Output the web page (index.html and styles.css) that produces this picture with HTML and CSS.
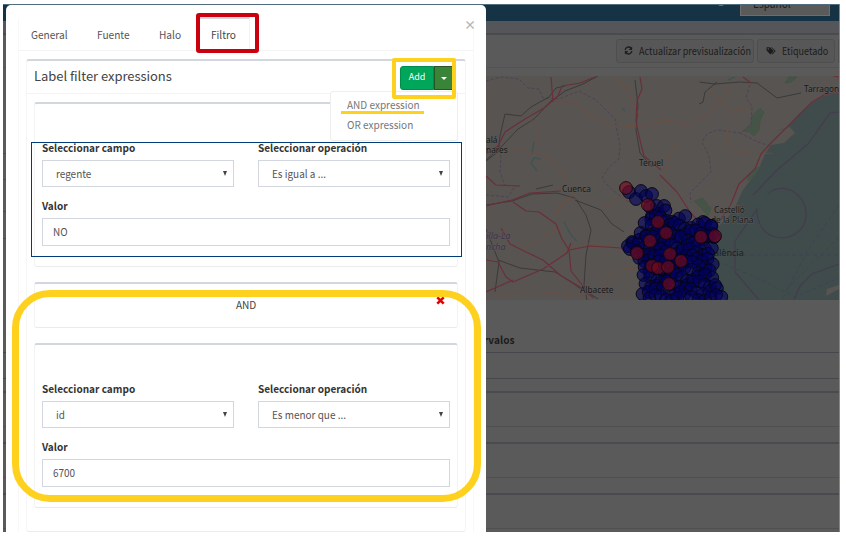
FILE: index.html
```html
<!DOCTYPE html>
<html lang="es">
<head>
<meta charset="utf-8">
<title>Filtro de etiquetas</title>
<link rel="stylesheet" href="styles.css">
</head>
<body>
<div class="frame">
  <div class="page">
    <header class="navbar"><i class="avatar"></i><div class="language"><span>Español</span></div></header>
    <div class="subbar"></div>
    <div class="toolbar">
      <button class="tool"><svg class="tool-icon" viewBox="0 0 16 16"><path d="M2 7a6 6 0 0 1 10.500-3M14 9a6 6 0 0 1-10.500 3" fill="none" stroke="currentColor" stroke-width="2.400"/><path d="M14.500 1v6h-6zM1.500 15V9h6z"/></svg><span class="t-refresh">Actualizar previsualización</span></button>
      <button class="tool tool-tag"><svg class="tool-icon tag-icon" viewBox="0 0 18 16"><path fill-rule="evenodd" d="M1 2h6l7 7-6 6-7-7zM4 4a1.300 1.300 0 1 0 .1 0z"/><path d="M9 2h1.500l7 7-6 6-1-1 5-5z"/></svg><span class="t-tag">Etiquetado</span></button>
      <button class="tool tool-cut"></button>
    </div>
    <div class="map-row">
      <div class="side-lines"></div>
      <svg class="map" viewBox="486 76 353 224" preserveAspectRatio="none">
        <rect x="486" y="76" width="353" height="224" fill="#575451"/>
        <path d="M839 93L824 96 812 103 799 114 786 129 776 131 790 127 795 133 784 143 771 145 765 154 760 166 752 178 743 190 736 205 728 217 718 227 713 240 707 255 712 278 725 300H839V289L826 296 827 289 839 285z" fill="#404b4b"/>
        <g class="green"><path d="M760 108l-8 8-1 9-8 6 6 1 5 4 5-6 1-9 4-9zM785 83l4-6h8l-6 5zM760 167l-6 2-5 6-2 6 8-6zM694 201l9-3 5 7 3 3-3 8-6-7z"/></g>
        <g class="water"><path d="M534 142l-2 12M541 159l-7-1-3 5 6 8M564 222l4 8 4 6 5 5M728 80l7-3M622 108l3 3"/></g>
        <g class="boundary">
          <path d="M486 81l15-4 18 2 9 9 11 1 4 9 16 1 20-8 17 9 10 10 9 9 2 12 3 14-1 14-10 8-7 11 7 9 10 8 11 8"/>
          <path d="M750 85l-4 13 6 8-1 18-10 9-24-3-10 4-5 8 7 14 2 16-12 12-9 9 1 10M740 133l18 9 12 4M499 145l2 12-1 15 5 14M486 195l22 2 8-12"/>
        </g>
        <g class="sea-line"><path d="M839 112l-9 1-22 31-31 26-24 25M768 194c5-7 18-7 26-2 14 9 16 28 5 39-12 11-31 8-38-5-4-6-4-15-4-17l-22 32v31l24 28M839 264l-27 10-12 12-6 14"/></g>
        <g class="ferry"><path d="M722 255h117M839 205l-30 43-27 52M717 261l42 18 36 18 44-19M839 237l-54 54"/></g>
        <g class="rail">
          <path d="M486 161l12-9 2-16 5-22 16 2 10-9 18-10 7-9 9-2M553 100l12-9 18-7 15-8M486 160l16-14 16-17 16-10 19-20M486 205l26-4 20-7 25-1 18 5 11 17 5 15-5 25-2 30 4 20M486 229l13 33-4 30M498 260l22 8 35 4 25 15 18 12M635 80l3 25-2 25 4 23 12 14M699 82l16 2 25-2 17 1 20 15 24-5M717 82l-12 10-2 10-4 2M575 200l26 10 11 14 12 8M536 189l17-4"/>
        </g>
        <g class="secondary">
          <path d="M553 102l20 0 18 13 20 10 26 2 17-4 18-3M615 77l14 14 2 8 8 16M530 119l10 14-5 10 1 10M506 147l19 4 20 6 10 5 9 16 8 10 4 12M660 118l25 7 18-7 12-10 6-5M695 78l12 12 18 13 7 9 18-5M721 103l4-10 6-10M730 110l-1 24-3 10 12 8 20 2 15-1M652 189l13-15 4-18 10-16M572 195l-14 14-1 20-20 12-14 8M547 240l14 14 21-11 37 5M498 295l22-4 30 1 29 4 22-6 15-20 35-4M600 209l21-12 24 12"/>
        </g>
        <g class="motorway">
          <path d="M486 154l12-8 7-14 20-13 19-11 14-12 4-10 18-3 15-6M553 102l-2-25M640 77l2 12-5 12-1 20 3 15 5 20 17 14M839 92l-15 3-12 7-14 14-16 16-12 12-9 10-6 15-16 15-8 20-12 18M660 175l17 17 13 20 12 13M486 206l26-6 18-7 31-2M513 202l13 9 13 1 17 12 6 15 7 11 21-4 31 2M486 176l10 9 24 1M501 228l9 16 14 7 19 9 17 15 14 9 20 14M486 260l12 2 8 15 7 5 30-13 24-16 4-10M569 249l2 22 12 15M486 292l27-12M839 77l-6-1M743 77l8 6"/>
        </g>
        <g class="place">
          <text x="486" y="143">alá</text><text x="486" y="153">nares</text>
          <text x="639" y="166">Teruel</text><text x="804" y="92">Tarragona</text>
          <text x="562" y="192">Cuenca</text><text x="580" y="293">Albacete</text>
          <text x="714" y="213">Castelló</text><text x="711" y="223">de la Plana</text>
          <text class="region" x="486" y="239">illa-La</text><text class="region" x="486" y="250">ncha</text>
        </g>
        <g id="markers"></g>
        <text class="valencia" x="714" y="256">alència</text>
      </svg>
    </div>
    <div class="interval-title"><span>Intervalos</span></div>
    <div class="interval-input"></div>
    <div class="back-box"></div>
    <div class="back-box"></div>
    <div class="back-box"></div>
  </div>

  <section class="modal">
    <button class="close">×</button>
    <div class="tab-card">
      <nav class="tabs">
        <a class="tab"><span>General</span></a><a class="tab tab-fuente"><span>Fuente</span></a><a class="tab tab-halo"><span>Halo</span></a><a class="tab active"><span>Filtro</span></a>
      </nav>
      <div class="panel">
        <div class="panel-head">
          <h3>Label filter expressions</h3>
          <div class="split"><button class="add">Add</button><button class="toggle"><i></i></button></div>
        </div>
        <div class="panel-body">
          <div class="box expression">
            <div class="grid">
              <div><label><span>Seleccionar campo</span></label><div class="control select"><span>regente</span></div></div>
              <div><label><span>Seleccionar operación</span></label><div class="control select"><span>Es igual a ...</span></div></div>
            </div>
            <label class="value-label"><span>Valor</span></label>
            <div class="control input"><span>NO</span></div>
          </div>
          <div class="box operator"><span>AND</span><svg class="remove" viewBox="0 0 9 9"><path d="M1.300 1.300l6.400 6.400M7.700 1.300L1.300 7.700"/></svg></div>
          <div class="box expression">
            <div class="grid">
              <div><label><span>Seleccionar campo</span></label><div class="control select"><span>id</span></div></div>
              <div><label><span>Seleccionar operación</span></label><div class="control select"><span>Es menor que ...</span></div></div>
            </div>
            <label class="value-label"><span>Valor</span></label>
            <div class="control input"><span>6700</span></div>
          </div>
        </div>
      </div>
    </div>
    <div class="dropdown"><a><span>AND expression</span></a><a><span>OR expression</span></a></div>
  </section>
</div>
<div class="mark mark-tab"></div>
<div class="mark mark-add"></div>
<div class="mark mark-line"></div>
<div class="mark mark-first"></div>
<div class="mark mark-second"></div>
<script src="markers.js"></script>
</body>
</html>
```
FILE: styles.css
```css
* { box-sizing: border-box; }
body { margin: 0; width: 846px; height: 536px; overflow: hidden; background: #fff; position: relative; font: 11px/16px "Noto Sans CJK SC", "Noto Sans", sans-serif; color: #555; padding: 4px 0 0 3px; }
button { font: inherit; padding: 0; margin: 0; }
span { white-space: nowrap; display: inline-block; transform-origin: left center; }

.frame { width: 837px; height: 528px; position: relative; overflow: hidden; }
.page { height: 528px; background: #5a5a5a; border-right: 1px solid #858585; display: flex; flex-direction: column; color: #1c1c1c; }
.page > * { flex-shrink: 0; }
.navbar { height: 17px; background: #163346; border-top: 1px solid #506c7d; display: flex; justify-content: flex-end; padding-right: 9px; overflow: hidden; }
.avatar { width: 10px; height: 10px; border-radius: 50%; background: #6e757a; margin: -9px 14px 0 0; }
.language { width: 90px; height: 11px; border: 1px solid #6d6d6d; border-top: 0; background: #5a5a5a; overflow: hidden; padding-left: 12px; }
.language span { display: block; margin-top: -10px; font-size: 11.500px; transform: scaleX(.88); }
.subbar { height: 14px; background: #555659; border-bottom: 2px solid #4a4b4e; }
.toolbar { height: 33px; border-bottom: 1px solid #535353; display: flex; justify-content: flex-end; gap: 3px; padding-top: 4px; }
.tool { height: 24px; border: 1px solid #4e4e4e; border-radius: 3px; background: #575757; color: #1c1c1c; width: 138px; display: flex; align-items: center; padding-left: 7px; gap: 6px; font-size: 10.500px; flex: none; line-height: 20px; padding-bottom: 1px; }
.tool span { transform: scaleX(.86); }
.tool-tag { width: 78px; padding-left: 8px; }
.tool-cut { width: 1px; border-right: 0; padding: 0; border-radius: 0; }
.tool-icon { width: 9px; height: 9px; fill: currentColor; flex: none; }
.tag-icon { width: 10px; }

.map-row { height: 232px; padding-top: 8px; display: flex; justify-content: space-between; }
.side-lines { width: 3px; background: linear-gradient(#4a4a4f 0 1px, transparent 1px 26px, #4a4a4f 26px 27px, transparent 27px 58px, #4a4a4f 58px 59px, transparent 59px 85px, #4a4a4f 85px 86px, transparent 86px); margin-top: 77px; }
.map { width: 353px; height: 224px; display: block; }
.map path { stroke-linejoin: round; }
.green path { fill: #465448; stroke: #3e5542; stroke-width: .8; }
.water path { fill: none; stroke: #405454; stroke-width: 1.600; }
.boundary path { fill: none; stroke: #4d4355; stroke-width: 1; stroke-dasharray: 3 2; }
.sea-line path { fill: none; stroke: #443c4e; stroke-width: 1.200; }
.ferry path { fill: none; stroke: #384254; stroke-width: .8; stroke-dasharray: 4 3; }
.rail path { fill: none; stroke: #353433; stroke-width: .8; }
.secondary path { fill: none; stroke: #704c3c; stroke-width: .8; }
.motorway path { fill: none; stroke: #6b2f3a; stroke-width: 1.200; }
.place text { font: 8.300px "Noto Sans", sans-serif; fill: #171717; stroke: #5c5a58; stroke-width: 1.200px; paint-order: stroke; }
.place .region { font-style: italic; fill: #3f3048; font-size: 9px; }
.valencia { font: 9px "Noto Sans", sans-serif; fill: #1c1f22; }
.marker { fill: #02025c; fill-opacity: .62; stroke: #040414; stroke-width: .9; }
.marker.red { fill: #7a0c18; fill-opacity: .62; }

.interval-title { margin-top: 32px; padding-left: 461px; height: 20px; line-height: 16px; font-weight: 700; font-size: 10.500px; }
.interval-title span { transform: scaleX(.965); }
.interval-input { height: 27px; border: solid #46464d; border-width: 1px 0; margin-bottom: 12px; }
.back-box { height: 36px; border-top: 2px solid #4a4a50; border-bottom: 1px solid #505052; margin-bottom: 15px; }

.modal { position: absolute; left: 3px; top: 1px; width: 480px; height: 540px; background: #fff; border-radius: 5px 5px 0 0; padding: 12px 12px 0; }
.close { position: absolute; left: 458px; top: 11px; width: 11px; height: 18px; border: 0; background: none; color: #b5b5b5; font: 700 12px/18px "Noto Sans CJK SC", sans-serif; }
.tab-card { width: 456px; height: 528px; border: 1px solid #f8f8f8; border-top: 0; border-radius: 3px; }
.tabs { height: 34px; border-bottom: 1px solid #f4f4f4; display: flex; padding-left: 12px; line-height: 34px; }
.tab { width: 66px; display: block; }
.tab span { transform: scaleX(.92); }
.tab-fuente { width: 62px; }
.tab-halo { width: 39px; }
.tab.active { width: 52px; border: solid #f4f4f4; border-width: 2px 1px 0; border-top-color: #d2d6de; padding-left: 12px; line-height: 30px; color: #444; }
.panel { margin: 8px 7px 0; height: 473px; border: 1px solid #f5f5f5; border-top: 2px solid #d2d6de; border-bottom-color: #ececec; border-radius: 3px; }
.panel-head { height: 33px; border-bottom: 1px solid #f4f4f4; display: flex; justify-content: space-between; padding: 5px 11px 0 7px; color: #444; }
h3 { margin: 0; font-size: 13px; line-height: 20px; font-weight: 400; letter-spacing: -.05px; }
.split { display: flex; height: 24px; }
.add { width: 34px; background: #00a65a; border: 1px solid #008d4c; border-radius: 3px 0 0 3px; color: #fff; font-size: 9px; line-height: 20px; padding-bottom: 2px; }
.toggle { width: 20px; background: #398439; border: 1px solid #255625; display: flex; align-items: center; justify-content: center; }
.toggle i { border: 3px solid transparent; border-top-color: #fff; border-bottom: 0; }
.panel-body { padding: 8px 7px 0; }
.box { border: 1px solid #f3f3f3; border-top: 2px solid #d2d6de; border-bottom-color: #ebebeb; border-radius: 3px; margin-bottom: 15px; }
.expression { height: 165px; padding: 36px 7px 0; }
.operator { height: 46px; position: relative; text-align: center; line-height: 40px; color: #444; margin-bottom: 15px; }
.operator span { transform: scaleX(.92); transform-origin: center; }
.remove { position: absolute; left: 401px; top: 12px; width: 9px; height: 9px; stroke: #e60000; stroke-width: 2.600; }
.grid { display: grid; grid-template-columns: 192px 192px; column-gap: 24px; }
label { display: block; height: 20px; line-height: 16px; font-weight: 700; color: #333; font-size: 10.500px; }
label span { transform: scaleX(.955); }
.value-label { margin-top: 11px; }
.control { border: 1px solid #d2d6de; height: 27px; line-height: 25px; background: #fff; color: #555; }
.control span { transform: scaleX(.905); }
.select { padding-left: 13px; position: relative; }
.select::after { content: ""; position: absolute; right: 6px; top: 10px; border: 2.500px solid transparent; border-top: 5px solid #444; border-bottom: 0; }
.input { height: 28px; line-height: 25px; padding-left: 10px; }
.dropdown { position: absolute; left: 324px; top: 86px; width: 128px; height: 50px; background: #fff; border: 1px solid #eee; border-radius: 3px; padding: 2px 0 0 16px; color: #777; }
.dropdown a { display: block; line-height: 20px; height: 20px; }
.dropdown span { transform: scaleX(.91); }

.mark { position: absolute; }
.mark-tab { left: 196px; top: 13px; width: 63px; height: 40px; border: 4px solid #c9000d; border-radius: 3px; }
.mark-add { left: 392px; top: 58px; width: 64px; height: 41px; border: 4px solid #ffd11f; border-radius: 2px; }
.mark-line { left: 341px; top: 111px; width: 83px; height: 3px; background: #ffd11f; }
.mark-first { left: 31px; top: 142px; width: 431px; height: 115px; border: 1px solid #003b7a; }
.mark-second { left: 12px; top: 290px; width: 469px; height: 212px; border: 7px solid #ffd11f; border-radius: 38px; }
```
FILE: markers.js
```js
// Point layer: dense coastal cluster described by row extents [y, left, right].
const rows = [[213,652,664],[219,651,684],[226,645,710],[233,640,714],[239,633,713],[246,627,712],[252,631,707],[258,638,709],[264,646,712],[271,648,709],[278,645,712],[284,644,716],[291,644,716],[298,648,722]];
const loose = [[629,192],[636,199],[641,191],[646,196],[652,194],[650,207],[657,206],[664,206],[703,222],[711,226]];
const red = [[626,188],[648,205],[658,222],[666,233],[650,241],[637,253],[701,237],[715,236],[670,254],[652,266],[658,268],[668,267],[681,261],[669,284]];
const layer = document.getElementById('markers');
function dot(x, y, cls) {
  const c = document.createElementNS('http://www.w3.org/2000/svg', 'circle');
  c.setAttribute('cx', x);
  c.setAttribute('cy', y);
  c.setAttribute('r', 6.4);
  c.setAttribute('class', cls);
  layer.appendChild(c);
}
loose.forEach(p => dot(p[0], p[1], 'marker'));
rows.forEach(([y, a, b], r) => {
  const n = Math.max(1, Math.round((b - a) / 6));
  for (let i = 0; i <= n; i++) {
    dot(a + (b - a) * i / n + Math.sin(i * 7 + r * 3) * 1.5, y + Math.cos(i * 5 + r * 11) * 3, 'marker');
  }
});
red.forEach(p => dot(p[0], p[1], 'marker red'));
```
